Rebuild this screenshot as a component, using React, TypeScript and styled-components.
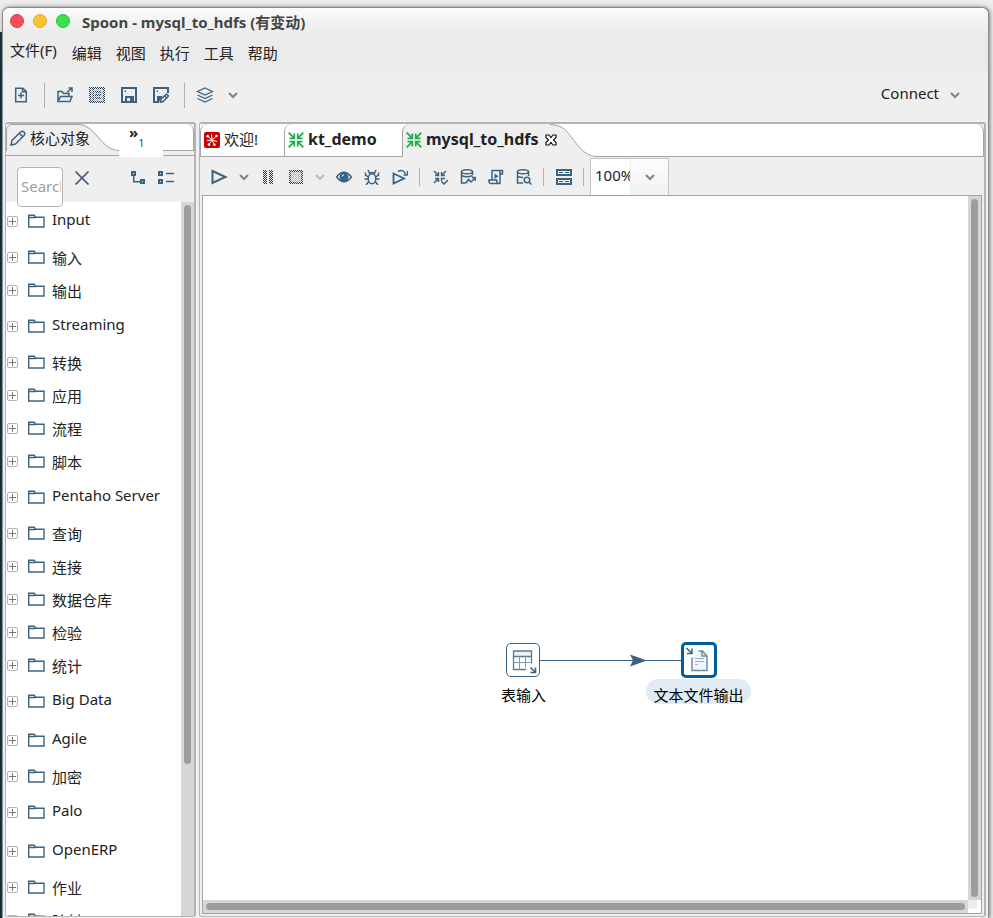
import React from "react";
import styled, { createGlobalStyle, css } from "styled-components";

const ink = "#3b6380";
const line = "#a3a3a3";
const chrome = "#efefef";

const GlobalStyle = createGlobalStyle`
  * { box-sizing: border-box; }
  body {
    margin: 0;
    background: #ededed;
    color: #222;
    font: 15px/20px "Noto Sans", "Noto Sans CJK SC", sans-serif;
  }
  button, input { font: inherit; color: inherit; }
  button { margin: 0; padding: 0; border: 0; background: none; }
`;

/* ---------- window frame ---------- */

const Desktop = styled.div`
  height: 100vh;
  padding: 7px 4px 0 2px;
  background: linear-gradient(#ededed 0 32px, #04222e 32px) 0 0 / 3px 100% no-repeat, #ededed;
  overflow: hidden;
`;

const Window = styled.div`
  display: flex;
  flex-direction: column;
  height: 100%;
  border: 1px solid #8a8a8a;
  border-bottom: 0;
  border-radius: 7px 7px 0 0;
  background: ${chrome};
  box-shadow: 1px 0 4px #777;
  overflow: hidden;
`;

const Header = styled.header`
  height: 63px;
  background: linear-gradient(#fbfbfb, #ebebeb 26px);
`;

const TitleBar = styled.div`
  display: flex;
  align-items: center;
  gap: 9px;
  height: 26px;
  padding-left: 7px;
`;

const Light = styled.button<{ $fill: string; $edge: string }>`
  width: 14px;
  height: 14px;
  border: 1px solid ${(p) => p.$edge};
  border-radius: 50%;
  background: ${(p) => p.$fill};
`;

const Title = styled.h1`
  margin: 2px 0 0 3px;
  color: #454545;
  font: bold 15px/20px "Noto Sans", "Noto Sans CJK SC", sans-serif;
`;

const MenuBar = styled.nav`
  display: flex;
  gap: 14px;
  padding: 7px 7px;
`;

const MenuItem = styled.button<{ $raised?: boolean }>`
  height: ${(p) => (p.$raised ? 18 : 24)}px;
  margin-right: ${(p) => (p.$raised ? 1 : 0)}px;
  line-height: ${(p) => (p.$raised ? 18 : 20)}px;
`;

/* ---------- toolbars ---------- */

const MainTools = styled.div`
  display: flex;
  align-items: center;
  gap: 8px;
  height: 51px;
  padding: 0 27px 3px 6px;
`;

const ToolButton = styled.button<{ $w: number }>`
  display: flex;
  align-items: center;
  justify-content: center;
  flex: none;
  width: ${(p) => p.$w}px;
  height: 24px;
  color: ${ink};
`;

const Divider = styled.span<{ $before: number; $after: number }>`
  flex: none;
  width: 1px;
  height: ${(p) => (p.$before > 1 ? 25 : 18)}px;
  margin: 0 ${(p) => p.$after}px 0 ${(p) => p.$before}px;
  background: #b0b0b0;
`;

const Connect = styled.button`
  display: flex;
  align-items: center;
  gap: 10px;
  margin-left: auto;
  span { padding-bottom: 4px; }
`;

/* ---------- panes ---------- */

const Panes = styled.div`
  display: grid;
  grid-template-columns: 191px minmax(0, 1fr);
  gap: 3px;
  flex: 1;
  min-height: 0;
  padding: 0 2px 1px 2px;
`;

const Pane = styled.section`
  display: flex;
  flex-direction: column;
  min-width: 0;
  min-height: 0;
  border: 2px solid #b4b4b4;
  border-width: 2px 2px 1px 1px;
  border-radius: 3px;
  background: ${chrome};
  overflow: hidden;
`;

const TabStrip = styled.div`
  display: flex;
  flex: none;
  height: 33px;
  border-bottom: 1px solid ${line};
  border-right: 1px solid ${line};
  border-top-right-radius: 8px;
  background: #fff;
`;

const SideStrip = styled.div`
  display: flex;
  flex: none;
  height: 32px;
  border-bottom: 1px solid ${line};
`;

const SideTab = styled.div`
  display: flex;
  align-items: center;
  position: relative;
  width: 113px;
  height: 27px;
`;

const SideTabShape = styled.svg`
  position: absolute;
  left: 0;
  top: 0;
`;

const SideTabButton = styled.button`
  position: relative;
  display: flex;
  align-items: center;
  gap: 4px;
  padding-left: 4px;
  white-space: nowrap;
  svg { color: ${ink}; }
  span { padding-top: 1px; }
`;

const More = styled.button`
  display: flex;
  flex: none;
  width: 44px;
  height: 33px;
  padding-left: 10px;
  background: #fff;
  font: bold 15px/16px "Noto Sans", sans-serif;
  text-align: left;
  position: relative;
  small {
    padding-top: 11px;
    color: #284a78;
    font: 11px/16px "Noto Sans", sans-serif;
  }
`;

const StripRest = styled.div`
  flex: 1;
  height: 27px;
  border-bottom: 1px solid ${line};
  border-right: 1px solid ${line};
  border-top-right-radius: 7px;
  background: #fff;
`;

const Tab = styled.button<{ $w: number }>`
  display: flex;
  align-items: center;
  gap: 4px;
  flex: none;
  width: ${(p) => p.$w}px;
  height: 32px;
  padding: 0 0 0 3px;
  border-left: 1px solid ${line};
  border-top-left-radius: 8px;
  white-space: nowrap;
`;

const ActiveTab = styled.div`
  display: flex;
  align-items: center;
  flex: none;
  position: relative;
  z-index: 1;
  width: 148px;
  height: 33px;
  padding-bottom: 1px;
  border-left: 1px solid ${line};
  border-top-left-radius: 8px;
  background: ${chrome};
`;

const ActiveTabButton = styled.button`
  display: flex;
  align-items: center;
  flex: none;
  gap: 4px;
  padding: 0 7px 0 3px;
  white-space: nowrap;
`;

const CloseButton = styled.button`
  display: flex;
  flex: none;
  svg { flex: none; }
`;

const TabText = styled.span<{ $regular?: boolean }>`
  padding-bottom: 3px;
  font-size: ${(p) => (p.$regular ? 15 : 16)}px;
  font-weight: ${(p) => (p.$regular ? 400 : 700)};
`;

const TabTail = styled.svg`
  flex: none;
  display: block;
`;

const SearchRow = styled.div`
  display: flex;
  flex: none;
  gap: 11px;
  height: 46px;
  padding: 10px 0 0 11px;
`;

const Search = styled.input`
  position: relative;
  width: 46px;
  height: 40px;
  margin-top: 1px;
  padding: 0 1px 3px 3px;
  border: 1px solid #b5b5b5;
  border-radius: 4px;
  background: #fff;
  &::placeholder { color: #a0a0a0; opacity: 1; }
`;

const SearchTools = styled.div`
  display: flex;
  gap: 4px;
  & > :nth-child(2) { margin-left: 32px; }
`;

const TreeArea = styled.div`
  display: flex;
  flex: 1;
  min-height: 0;
  background: #fff;
`;

const Tree = styled.ul`
  flex: 1;
  margin: 0;
  padding: 0;
  list-style: none;
  overflow: hidden;
`;

const Row = styled.li<{ $latin: boolean }>`
  display: flex;
  align-items: center;
  height: ${(p) => (p.$latin ? 39 : 33)}px;
  padding-left: 1px;
  span { padding: ${(p) => (p.$latin ? "0 0 4px" : "2px 0 0")}; }
`;

const Expander = styled.button`
  display: flex;
  width: 11px;
  height: 11px;
  margin-right: 10px;
  border: 1px solid #b3b3b3;
  border-radius: 2px;
`;

const RowLabel = styled.button`
  display: flex;
  align-items: center;
  gap: 7px;
  padding-bottom: 2px;
  white-space: nowrap;
`;

const Track = styled.div<{ $horizontal?: boolean }>`
  flex: none;
  padding: 3px;
  background: #d6d6d6;
  ${(p) => (p.$horizontal ? css`height: 13px;` : css`width: 13px;`)}
`;

const Thumb = styled.div<{ $part?: string }>`
  width: 100%;
  height: ${(p) => p.$part || "100%"};
  border-radius: 4px;
  background: #9b9d9f;
`;

/* ---------- editor ---------- */

const EditorTools = styled.div`
  display: flex;
  align-items: center;
  flex: none;
  gap: 8px;
  height: 38px;
  padding: 1px 0 0 10px;
`;

const Zoom = styled.div`
  display: flex;
  width: 79px;
  height: 37px;
  margin-left: -4px;
  border: 1px solid #c4c4c4;
  border-bottom: 0;
  background: #fff;
`;

const ZoomValue = styled.input`
  width: 39px;
  padding: 0 0 4px 4px;
  border: 0;
  outline: 0;
  background: #fff;
`;

const ZoomArrow = styled.button`
  flex: 1;
  display: flex;
  align-items: center;
  justify-content: center;
  border-left: 1px solid #eee;
  background: linear-gradient(#fdfdfd, #f1f1f1);
`;

const CanvasFrame = styled.div`
  display: grid;
  grid-template-columns: minmax(0, 1fr) 13px;
  grid-template-rows: minmax(0, 1fr) 13px;
  flex: 1;
  min-height: 0;
  margin: 0 2px 2px 2px;
  border: 1px solid ${line};
  background: #fff;
`;

const Canvas = styled.div`
  position: relative;
  overflow: hidden;
`;

const Corner = styled.div`
  width: 9px;
  height: 9px;
  background: #ededed;
`;

const Hop = styled.svg`
  position: absolute;
  left: 337px;
  top: 456px;
`;

const Step = styled.button<{ $x: number; $y: number }>`
  position: absolute;
  left: ${(p) => p.$x}px;
  top: ${(p) => p.$y}px;
  display: flex;
  flex-direction: column;
  align-items: center;
  width: 105px;
  color: #000;
`;

const StepBox = styled.span<{ $on?: boolean }>`
  display: flex;
  align-items: center;
  justify-content: center;
  width: ${(p) => (p.$on ? 36 : 34)}px;
  height: ${(p) => (p.$on ? 36 : 34)}px;
  margin: ${(p) => (p.$on ? "0" : "1px 2px 1px 0")};
  border: ${(p) => (p.$on ? "3px solid #005d9f" : "1px solid #3b6380")};
  border-radius: 5px;
  background: #fff;
  color: ${ink};
  svg { flex: none; }
`;

const StepName = styled.span<{ $on?: boolean }>`
  width: 100%;
  height: 25px;
  margin-top: 1px;
  padding-top: 6px;
  border-radius: 13px;
  background: ${(p) => (p.$on ? "#e1ebf5" : "none")};
  text-align: center;
`;

/* ---------- icons ---------- */

const Svg = ({ children, w = 16, h = 16, sw = 1.5 }: { children: React.ReactNode; w?: number; h?: number; sw?: number }) => (
  <svg width={w} height={h} viewBox={`0 0 ${w} ${h}`} fill="none" stroke="currentColor" strokeWidth={sw} aria-hidden="true">
    {children}
  </svg>
);

const Chevron = ({ color = "#828282" }: { color?: string }) => (
  <svg width="12" height="8" viewBox="0 0 12 8" fill="none" stroke={color} strokeWidth="2" aria-hidden="true">
    <path d="M2 2l4 4 4-4" />
  </svg>
);

const Dither = () => (
  <defs>
    <pattern id="dither" width="2" height="2" patternUnits="userSpaceOnUse">
      <path d="M0 0h1v1H0zM1 1h1v1H1z" fill="#26384a" stroke="none" />
    </pattern>
    <pattern id="ditherSoft" width="2" height="2" patternUnits="userSpaceOnUse">
      <path d="M0 0h1v1H0zM1 1h1v1H1z" fill="#b4b8bc" stroke="none" />
    </pattern>
  </defs>
);

const NewFile = () => (
  <Svg><path d="M2.700 1.200h7.200l3.400 3.400v10.200H2.700zM9.500 1.200v3.600h3.800" /><path d="M8 5.500v6M5 8.500h6" /></Svg>
);
const OpenFile = () => (
  <Svg><path d="M1 14.500V4.500h4l1.500 2H12v3M1 14.500l2.500-5H15l-2 5z" /><path d="M10 5.500L15 1M11.500 1H15v4" /></Svg>
);
const Explorer = () => (
  <Svg>
    <Dither />
    <path d="M0 0h16v16H0z" fill="url(#ditherSoft)" stroke="none" />
    <path d="M0 0h16v16H0zM2 2v12h1.500V2zM5 2v12h9V2z" fill="url(#dither)" fillRule="evenodd" stroke="none" />
    <path d="M6 4h6v2H6zM6 7h6v2H6zM6 10h6v2H6z" fill="url(#dither)" stroke="none" />
  </Svg>
);
const Save = () => (
  <Svg sw={2}>
    <path d="M1 1h14v14H1z" />
    <path d="M4 9h9v6H4z" fill="currentColor" stroke="none" />
    <path d="M6 11h3v3H6z" fill="#efefef" stroke="none" />
    <path d="M3.500 3.500H5V5H3.500z" fill="currentColor" stroke="none" />
  </Svg>
);
const SaveAs = () => (
  <Svg>
    <path d="M6 15H1V1h14v5" strokeWidth="2" />
    <path d="M3.500 3.500H5V5H3.500zM4 9h5.500L6 15H4z" fill="currentColor" stroke="none" />
    <path d="M7.500 15.200l.5-3L13.500 7l2 2-5.300 5.600z" fill="#efefef" />
    <path d="M11.500 9l2 2" />
  </Svg>
);
const Layers = () => (
  <Svg w={18} sw={1.3}><path d="M9 1l7.500 3.500L9 8 1.500 4.500z" /><path d="M1.500 8L9 11.500 16.500 8M1.500 11.500L9 15l7.500-3.500" /></Svg>
);
const Pencil = () => (
  <Svg><path d="M1 15l1-4.500L10.500 2q2-1.500 3.500 0t0 3.500L5.500 14zM9.500 3.500l3 3" /></Svg>
);
const Cross = () => <Svg sw={1.7}><path d="M1.500 1.500l13 13M14.500 1.500l-13 13" stroke="#41566a" /></Svg>;
const ExpandTree = () => (
  <Svg><path d="M2 2h3v3H2zM11 10h3v3h-3z" strokeWidth="2" /><path d="M3.700 6v5.700H10" /></Svg>
);
const ListTree = () => (
  <Svg w={18}><path d="M2 2h3v3H2zM2 10h3v3H2z" strokeWidth="2" /><path d="M9 3.500h8M9 11.500h8" /></Svg>
);
const Folder = () => (
  <Svg w={17} h={14} sw={1.4}><path d="M.7 13V1.200h5.500l1.300 2H16V13zM.7 3.500h7" stroke={ink} /></Svg>
);
const Play = () => <Svg w={18}><path d="M1.500 2l13 6-13 6z" strokeWidth="2" /></Svg>;
const Pause = () => (
  <Svg><path d="M3 1h4v14H3zM9 1h4v14H9z" fill="url(#dither)" stroke="none" /></Svg>
);
const Stop = () => (
  <Svg>
    <path d="M1 1h14v14H1z" fill="url(#ditherSoft)" stroke="none" />
    <path d="M1 1h14v14H1zM3 3v10h10V3z" fill="url(#dither)" fillRule="evenodd" stroke="none" />
  </Svg>
);
const Eye = () => (
  <Svg><path d="M.6 8Q8-1.500 15.400 8 8 17.500.6 8z" /><circle cx="8" cy="8" r="4.500" fill="currentColor" stroke="none" /><path d="M6 7.500Q6.300 6 8 5.800" stroke="#fff" strokeWidth="1" /></Svg>
);
const Bug = () => (
  <Svg><ellipse cx="8" cy="9.800" rx="3.800" ry="5" /><path d="M5 5Q8 2 11 5M5.500 4L4 1M10.500 4L12 1M4.500 8L1.500 6V3.500M11.500 8l3-2V3.500M4.200 10H.5M11.800 10h3.700M4.800 12.500L2 16M11.200 12.500L14 16" /></Svg>
);
const Replay = () => (
  <Svg><path d="M1.500 4.500l10.500 5-10.500 5z" strokeWidth="1.800" /><path d="M6 2.500Q11-.5 13.500 5M15.500 2v4h-4" /></Svg>
);
const Verify = () => (
  <Svg><path d="M2 2l4.500 4.500M6.500 3v3.500H3M14 2L9.500 6.500M9.500 3v3.500H13M2 14l4.500-4.500M3 9.500h3.500V13M13 9.500H9.500V12M9.500 12.500L12 15l4-4" /></Svg>
);
const DbTrend = () => (
  <Svg><path d="M5 14H1.500V2.500M12.500 6V2.500" /><ellipse cx="7" cy="2.800" rx="5.500" ry="2" /><path d="M1.500 6.500Q6 9 12.500 6.800M5.500 14.500l3-4 2.500 2.500L15 9M12 8.500h3.500V12" /></Svg>
);
const ScriptIcon = () => (
  <Svg><path d="M4 11V1.500h10.500V5H12v9.500H2Q.5 13 1 11h7.500Q8.500 14 10.500 14.500M12 5V2" /><path d="M6.500 4.500l4 2.800-4 2.800z" fill="currentColor" stroke="none" /></Svg>
);
const DbSearch = () => (
  <Svg><path d="M7 14H1.500V2.500M12.500 7V2.500" /><ellipse cx="7" cy="2.800" rx="5.500" ry="2" /><path d="M1.500 7.500Q4 8.500 7 8.500" /><circle cx="11" cy="11" r="2.800" /><path d="M13 13l2.500 2.500" /></Svg>
);
const Results = () => (
  <Svg w={16}><path d="M1 1h14v5H1zM1 10h14v5H1z" strokeWidth="2" /><path d="M3 3.500h4M9 3.500h4M3 12.500h4M9 12.500h4" strokeWidth="1" /></Svg>
);
const Welcome = () => (
  <Svg w={16} h={16} sw={1}>
    <rect width="16" height="16" rx="2" fill="#cc0000" stroke="none" />
    <path d="M8 8L3.500 4M8 8L7.500 2.500M8 8l4.500-4M8 8L3 8.500M8 8l5 1.500M8 8l-3 4.500M8 8l2.500 5" stroke="#fff" />
    <circle cx="3.700" cy="4.200" r="1.300" fill="#fff" stroke="none" /><circle cx="12.500" cy="4" r="1.300" fill="#fff" stroke="none" /><circle cx="5" cy="12.500" r="1.300" fill="#fff" stroke="none" /><circle cx="10.500" cy="12.700" r="1.200" fill="#fff" stroke="none" />
  </Svg>
);
const Transform = () => (
  <svg width="16" height="16" viewBox="0 0 16 16" fill="none" stroke="#1fae4b" strokeWidth="1.800" aria-hidden="true">
    <path d="M.7.7l5 5M6.300 1.500v4.800H1.500M15.300.7l-5 5M9.700 1.500v4.800h4.800M.7 15.300l5-5M1.500 9.700h4.800v4.800M15.300 15.300l-5-5M14.500 9.700H9.700v4.800" />
  </svg>
);
const CloseTab = () => (
  <svg width="12" height="12" viewBox="0 0 12 12" fill="#fff" stroke="#111" strokeWidth="1.200" aria-hidden="true">
    <path d="M1 1h3l2 2.500L8 1h3v2.500L8.500 6 11 8.500V11H8L6 8.500 4 11H1V8.500L3.500 6 1 3.500z" />
  </svg>
);
const TableStep = () => (
  <Svg w={28} h={28} sw={1.3}>
    <path d="M5 5h18v5H5z" fill="#e8f2f9" stroke="none" />
    <path d="M22.500 17.500V5H4.500v18.500H17M4.500 10.500h18" stroke="#587b95" />
    <path d="M10.500 10.500v13M16.500 10.500v11M4.500 16.500h17" strokeWidth="1" stroke="#7f9cb3" />
    <path d="M21.500 21.500l5 5M26.500 21.500v5h-5" strokeWidth="1.600" />
  </Svg>
);
const FileStep = () => (
  <Svg w={28} h={28}>
    <path d="M15 5H18.500l4.500 4.500V25H8V11" fill="#f0f6fb" stroke="none" />
    <path d="M7 11.500v13h15V10L17.500 5h-4M17 5v5h5" stroke="#6d8da5" />
    <path d="M10 12.500h9M10 15.500h9M10 18.500h3" strokeWidth="1" stroke="#9bb2c4" />
    <path d="M1.500 2l5 5M7 2.500v5H2" />
  </Svg>
);

/* ---------- content ---------- */

const folders = [
  "Input", "输入", "输出", "Streaming", "转换", "应用", "流程", "脚本", "Pentaho Server", "查询", "连接",
  "数据仓库", "检验", "统计", "Big Data", "Agile", "加密", "Palo", "OpenERP", "作业", "映射",
];

const Tool = ({ name, w = 20, children }: { name: string; w?: number; children: React.ReactNode }) => (
  <ToolButton type="button" aria-label={name} $w={w}>{children}</ToolButton>
);

export default function App() {
  return (
    <Desktop>
      <GlobalStyle />
      <Window>
        <Header>
          <TitleBar>
            <Light aria-label="关闭" $fill="#f54e57" $edge="#d93d46" />
            <Light aria-label="最小化" $fill="#fcc335" $edge="#dda52a" />
            <Light aria-label="最大化" $fill="#35e54a" $edge="#27bd3a" />
            <Title>Spoon - mysql_to_hdfs (有变动)</Title>
          </TitleBar>
          <MenuBar>
            <MenuItem $raised>文件(F)</MenuItem>
            {["编辑", "视图", "执行", "工具", "帮助"].map((m) => <MenuItem key={m}>{m}</MenuItem>)}
          </MenuBar>
        </Header>

        <MainTools>
          <Tool name="新建" w={24}><NewFile /></Tool>
          <Divider $before={3} $after={0} />
          <Tool name="打开" w={24}><OpenFile /></Tool>
          <Tool name="浏览" w={24}><Explorer /></Tool>
          <Tool name="保存" w={24}><Save /></Tool>
          <Tool name="另存为" w={24}><SaveAs /></Tool>
          <Divider $before={3} $after={0} />
          <Tool name="透视图" w={24}><Layers /></Tool>
          <Tool name="透视图菜单" w={16}><Chevron /></Tool>
          <Connect><span>Connect</span><Chevron /></Connect>
        </MainTools>

        <Panes>
          <Pane>
            <SideStrip>
              <SideTab>
                <SideTabShape width="113" height="27" viewBox="0 0 113 27" fill="none" stroke={line} aria-hidden="true">
                  <path d="M75 0C92 2 94 25 113 26.500V0z" fill="#fff" stroke="none" />
                  <path d="M.5 27V6Q1 .5 7 .5H72C90 .5 94 26 113 26.500" />
                </SideTabShape>
                <SideTabButton><Pencil /><span>核心对象</span></SideTabButton>
              </SideTab>
              <More aria-label="更多标签"><span>»</span><small>1</small></More>
              <StripRest />
            </SideStrip>
            <SearchRow>
              <Search aria-label="搜索" placeholder="Search" />
              <SearchTools>
                <Tool name="清除" w={16}><Cross /></Tool>
                <Tool name="展开全部" w={24}><ExpandTree /></Tool>
                <Tool name="折叠全部" w={24}><ListTree /></Tool>
              </SearchTools>
            </SearchRow>
            <TreeArea>
              <Tree>
                {folders.map((f) => (
                  <Row key={f} $latin={/^[A-Z]/.test(f)}>
                    <Expander aria-label={`展开 ${f}`}>
                      <svg width="9" height="9" viewBox="0 0 9 9" stroke="#777" aria-hidden="true"><path d="M1 4.500h7M4.500 1v7" /></svg>
                    </Expander>
                    <RowLabel><Folder /><span>{f}</span></RowLabel>
                  </Row>
                ))}
              </Tree>
              <Track><Thumb $part="79%" /></Track>
            </TreeArea>
          </Pane>

          <Pane>
            <TabStrip>
              <Tab $w={84}><Welcome /><TabText $regular>欢迎!</TabText></Tab>
              <Tab $w={118}><Transform /><TabText>kt_demo</TabText></Tab>
              <ActiveTab>
                <ActiveTabButton><Transform /><TabText>mysql_to_hdfs</TabText></ActiveTabButton>
                <CloseButton aria-label="关闭标签"><CloseTab /></CloseButton>
              </ActiveTab>
              <TabTail width="46" height="33" viewBox="0 0 46 33" aria-hidden="true">
                <path d="M0 0C14 1 17 8 22 14S34 32 46 32.500V33H0z" fill={chrome} />
                <path d="M0 .5C14 1 17 8 22 14S34 32 46 32.500" fill="none" stroke={line} />
              </TabTail>
            </TabStrip>
            <EditorTools>
              <Tool name="运行"><Play /></Tool>
              <Tool name="运行选项" w={12}><Chevron /></Tool>
              <Tool name="暂停"><Pause /></Tool>
              <Tool name="停止"><Stop /></Tool>
              <Tool name="停止选项" w={12}><Chevron color="#bcbcbc" /></Tool>
              <Tool name="预览"><Eye /></Tool>
              <Tool name="调试"><Bug /></Tool>
              <Tool name="重放"><Replay /></Tool>
              <Divider $before={1} $after={2} />
              <Tool name="检验"><Verify /></Tool>
              <Tool name="影响分析"><DbTrend /></Tool>
              <Tool name="获取 SQL"><ScriptIcon /></Tool>
              <Tool name="浏览数据库"><DbSearch /></Tool>
              <Divider $before={1} $after={2} />
              <Tool name="显示结果"><Results /></Tool>
              <Divider $before={1} $after={2} />
              <Zoom>
                <ZoomValue aria-label="缩放" defaultValue="100%" />
                <ZoomArrow aria-label="缩放选项"><Chevron /></ZoomArrow>
              </Zoom>
            </EditorTools>
            <CanvasFrame>
              <Canvas>
                <Hop width="142" height="16" viewBox="0 0 142 16" aria-hidden="true">
                  <path d="M0 8.500h142" stroke={ink} />
                  <path d="M90 2.500l17 6-17 6 3-6z" fill={ink} />
                </Hop>
                <Step $x={268} $y={446}>
                  <StepBox><TableStep /></StepBox>
                  <StepName>表输入</StepName>
                </Step>
                <Step $x={443} $y={446}>
                  <StepBox $on><FileStep /></StepBox>
                  <StepName $on>文本文件输出</StepName>
                </Step>
              </Canvas>
              <Track><Thumb /></Track>
              <Track $horizontal><Thumb /></Track>
              <Corner />
            </CanvasFrame>
          </Pane>
        </Panes>
      </Window>
    </Desktop>
  );
}
